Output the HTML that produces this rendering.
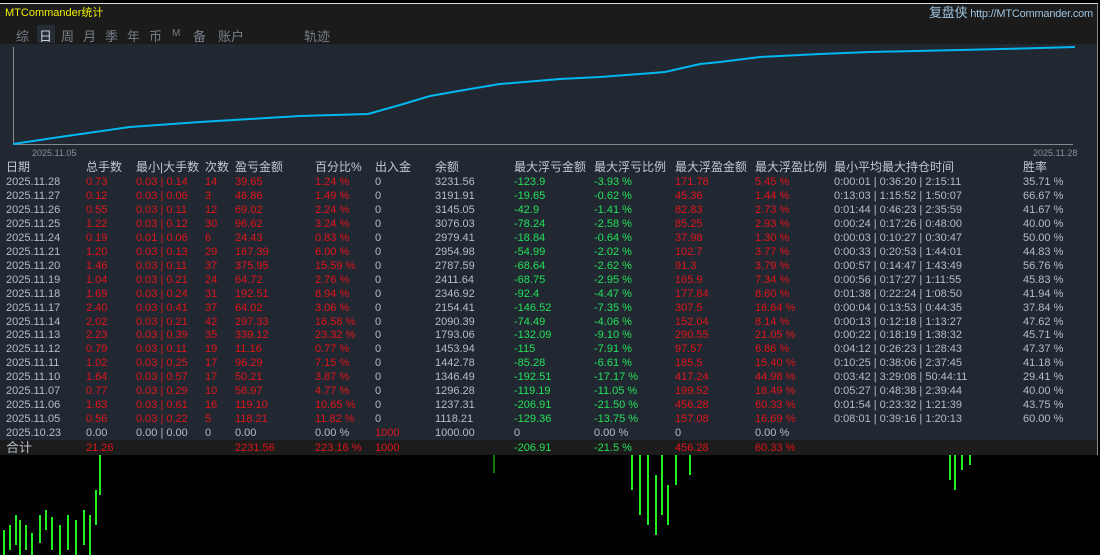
<!DOCTYPE html>
<html><head><meta charset="utf-8"><style>
body{margin:0;width:1100px;height:555px;background:#000;position:relative;overflow:hidden;font-family:"Liberation Sans","Noto Sans CJK SC",sans-serif;}
#panel{position:absolute;left:0;top:3px;width:1098px;height:452px;background:#1b1b1b;border-top:1px solid #ddd;border-right:1px solid #888;box-sizing:border-box}
#chart{position:absolute;left:0;top:44px;width:1097px;height:396px;background:#222831}
.t{position:absolute;white-space:nowrap;font-size:11px;line-height:14px}
.h{color:#c2c8d2;font-size:12px;}
.g{color:#b4bdc9}.r{color:#e0141a}.gr{color:#23e05a}
#total{position:absolute;left:0;top:440px;width:1097px;height:15px;background:#1c1c1c}
.tab{position:absolute;top:26px;color:#777e88;font-size:13px}
</style></head><body>
<div id="panel"></div>
<div id="chart"></div>
<div id="total"></div>
<div class="t" style="left:5px;top:6px;color:#f0f000;font-size:11px">MTCommander统计</div>
<div class="t" style="right:7px;top:6px;color:#9fc4e0;font-size:11px;letter-spacing:-0.2px"><span style="font-size:13px">复盘侠</span> http://MTCommander.com</div>
<div style="position:absolute;left:37px;top:25px;width:18px;height:18px;background:#272d36"></div>
<div class="tab" style="left:16px">综</div><div class="tab" style="left:39px;color:#c8d0dc">日</div><div class="tab" style="left:61px">周</div><div class="tab" style="left:83px">月</div><div class="tab" style="left:105px">季</div><div class="tab" style="left:127px">年</div><div class="tab" style="left:149px">币</div><div class="tab" style="left:172px;font-size:10px;top:28px">M</div><div class="tab" style="left:193px">备</div><div class="tab" style="left:218px">账户</div><div class="tab" style="left:304px">轨迹</div>
<svg style="position:absolute;left:0;top:0" width="1100" height="160">
<line x1="13.5" y1="47" x2="13.5" y2="144" stroke="#888" stroke-width="1"/>
<line x1="13" y1="144.5" x2="1073" y2="144.5" stroke="#888" stroke-width="1"/>
<polyline fill="none" stroke="#00b8f0" stroke-width="2" points="13,144 60,137 130,127 200,122 250,119 300,116 368,114 400,105 430,96 470,89 500,84 560,79 600,77 640,74 665,72 700,64 720,62 760,57 820,54 870,52 960,50 1040,48 1075,47"/>
</svg>
<div class="t" style="left:32px;top:146px;color:#8a9099;font-size:9px">2025.11.05</div>
<div class="t" style="left:1033px;top:146px;color:#8a9099;font-size:9px">2025.11.28</div>
<div id="rows"></div>
<svg style="position:absolute;left:0;top:455px" width="1100" height="100" stroke="#22ee22">
<g stroke-width="2"><line x1="4" y1="75" x2="4" y2="100"/><line x1="10" y1="70" x2="10" y2="95"/><line x1="16" y1="60" x2="16" y2="90"/><line x1="20" y1="65" x2="20" y2="100"/><line x1="26" y1="70" x2="26" y2="95"/><line x1="32" y1="78" x2="32" y2="100"/><line x1="40" y1="60" x2="40" y2="88"/><line x1="46" y1="55" x2="46" y2="75"/><line x1="52" y1="62" x2="52" y2="95"/><line x1="60" y1="70" x2="60" y2="100"/><line x1="68" y1="60" x2="68" y2="95"/><line x1="76" y1="65" x2="76" y2="100"/><line x1="84" y1="55" x2="84" y2="90"/><line x1="90" y1="60" x2="90" y2="100"/><line x1="96" y1="35" x2="96" y2="70"/><line x1="100" y1="0" x2="100" y2="40"/><line x1="632" y1="0" x2="632" y2="35"/><line x1="640" y1="0" x2="640" y2="60"/><line x1="648" y1="0" x2="648" y2="70"/><line x1="656" y1="20" x2="656" y2="80"/><line x1="662" y1="0" x2="662" y2="60"/><line x1="668" y1="30" x2="668" y2="70"/><line x1="676" y1="0" x2="676" y2="30"/><line x1="690" y1="0" x2="690" y2="20"/><line x1="950" y1="0" x2="950" y2="25"/><line x1="955" y1="0" x2="955" y2="35"/><line x1="962" y1="0" x2="962" y2="15"/><line x1="970" y1="0" x2="970" y2="10"/></g>
<line x1="494" y1="0" x2="494" y2="18" stroke-width="1"/>
</svg>
<script>
var cols=[6,86,136,205,235,315,375,435,514,594,675,755,834,1023];
var heads=["日期","总手数","最小|大手数","次数","盈亏金额","百分比%","出入金","余额","最大浮亏金额","最大浮亏比例","最大浮盈金额","最大浮盈比例","最小平均最大持仓时间","胜率"];
var data=[
["2025.11.28","0.73","0.03 | 0.14","14","39.65","1.24 %","0","3231.56","-123.9","-3.93 %","171.78","5.45 %","0:00:01 | 0:36:20 | 2:15:11","35.71 %"],
["2025.11.27","0.12","0.03 | 0.06","3","46.86","1.49 %","0","3191.91","-19.65","-0.62 %","45.36","1.44 %","0:13:03 | 1:15:52 | 1:50:07","66.67 %"],
["2025.11.26","0.55","0.03 | 0.11","12","69.02","2.24 %","0","3145.05","-42.9","-1.41 %","82.83","2.73 %","0:01:44 | 0:46:23 | 2:35:59","41.67 %"],
["2025.11.25","1.22","0.03 | 0.12","30","96.62","3.24 %","0","3076.03","-78.24","-2.58 %","85.25","2.93 %","0:00:24 | 0:17:26 | 0:48:00","40.00 %"],
["2025.11.24","0.19","0.01 | 0.06","6","24.43","0.83 %","0","2979.41","-18.84","-0.64 %","37.98","1.30 %","0:00:03 | 0:10:27 | 0:30:47","50.00 %"],
["2025.11.21","1.20","0.03 | 0.13","29","167.39","6.00 %","0","2954.98","-54.99","-2.02 %","102.7","3.77 %","0:00:33 | 0:20:53 | 1:44:01","44.83 %"],
["2025.11.20","1.46","0.03 | 0.11","37","375.95","15.59 %","0","2787.59","-68.64","-2.62 %","91.3","3.79 %","0:00:57 | 0:14:47 | 1:43:49","56.76 %"],
["2025.11.19","1.04","0.03 | 0.21","24","64.72","2.76 %","0","2411.64","-68.75","-2.95 %","165.9","7.34 %","0:00:56 | 0:17:27 | 1:11:55","45.83 %"],
["2025.11.18","1.69","0.03 | 0.24","31","192.51","8.94 %","0","2346.92","-92.4","-4.47 %","177.84","8.60 %","0:01:38 | 0:22:24 | 1:08:50","41.94 %"],
["2025.11.17","2.40","0.03 | 0.41","37","64.02","3.06 %","0","2154.41","-146.52","-7.35 %","307.5","16.64 %","0:00:04 | 0:13:53 | 0:44:35","37.84 %"],
["2025.11.14","2.02","0.03 | 0.21","42","297.33","16.58 %","0","2090.39","-74.49","-4.06 %","152.04","8.14 %","0:00:13 | 0:12:18 | 1:13:27","47.62 %"],
["2025.11.13","2.23","0.03 | 0.39","35","339.12","23.32 %","0","1793.06","-132.09","-9.10 %","290.55","21.05 %","0:00:22 | 0:18:19 | 1:38:32","45.71 %"],
["2025.11.12","0.79","0.03 | 0.11","19","11.16","0.77 %","0","1453.94","-115","-7.91 %","97.57","6.86 %","0:04:12 | 0:26:23 | 1:28:43","47.37 %"],
["2025.11.11","1.02","0.03 | 0.25","17","96.29","7.15 %","0","1442.78","-85.28","-6.61 %","185.5","15.40 %","0:10:25 | 0:38:06 | 2:37:45","41.18 %"],
["2025.11.10","1.64","0.03 | 0.57","17","50.21","3.87 %","0","1346.49","-192.51","-17.17 %","417.24","44.98 %","0:03:42 | 3:29:08 | 50:44:11","29.41 %"],
["2025.11.07","0.77","0.03 | 0.29","10","58.97","4.77 %","0","1296.28","-119.19","-11.05 %","199.52","18.49 %","0:05:27 | 0:48:38 | 2:39:44","40.00 %"],
["2025.11.06","1.63","0.03 | 0.61","16","119.10","10.65 %","0","1237.31","-206.91","-21.50 %","456.28","60.33 %","0:01:54 | 0:23:32 | 1:21:39","43.75 %"],
["2025.11.05","0.56","0.03 | 0.22","5","118.21","11.82 %","0","1118.21","-129.36","-13.75 %","157.08","16.69 %","0:08:01 | 0:39:16 | 1:20:13","60.00 %"]];
var cls=["g","r","r","r","r","r","g","g","gr","gr","r","r","g","g"];
var h="";
heads.forEach(function(t,i){h+='<div class="t h" style="left:'+cols[i]+'px;top:160px">'+t+'</div>';});
data.forEach(function(r,j){var y=175+j*13.95;r.forEach(function(t,i){h+='<div class="t '+cls[i]+'" style="left:'+cols[i]+'px;top:'+y+'px">'+t+'</div>';});});
var y=175+18*13.95;
var last=["2025.10.23","0.00","0.00 | 0.00","0","0.00","0.00 %","1000","1000.00","0","0.00 %","0","0.00 %","",""];
var lc=["g","g","g","g","g","g","r","g","g","g","g","g","g","g"];
last.forEach(function(t,i){h+='<div class="t '+lc[i]+'" style="left:'+cols[i]+'px;top:'+y+'px">'+t+'</div>';});
y=441;
var tot={0:["合计","g"],1:["21.26","r"],4:["2231.56","r"],5:["223.16 %","r"],6:["1000","r"],8:["-206.91","gr"],9:["-21.5 %","gr"],10:["456.28","r"],11:["60.33 %","r"]};
for(var k in tot){h+='<div class="t '+tot[k][1]+'" style="left:'+cols[k]+'px;top:'+y+'px;'+(k==0?'font-size:13px':'')+'">'+tot[k][0]+'</div>';}
document.getElementById("rows").innerHTML=h;
</script>
</body></html>
